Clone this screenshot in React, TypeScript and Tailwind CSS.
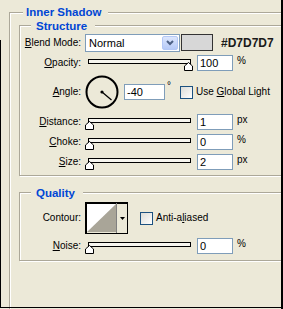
import React from "react";

const font = "font-['Liberation_Sans',Arial,sans-serif]";

function Legend({ title, offset }: { title: string; offset: "outer" | "inner" }) {
  return (
    <div
      className={
        offset === "outer"
          ? "-mt-[8px] mb-[-6px] flex h-[14px] items-center"
          : "-mt-[7px] mb-[-7px] flex h-[14px] items-center"
      }
    >
      <div className={offset === "outer" ? "w-[13px] shrink-0" : "w-[11px] shrink-0"} />
      <div
        className={
          offset === "outer"
            ? "bg-[#ECE9D8] pl-[3px] pr-[7px] text-[11.5px] font-bold leading-[14px] text-[#0046D5]"
            : "bg-[#ECE9D8] pl-[5px] pr-[8px] text-[11.5px] font-bold leading-[14px] text-[#0046D5]"
        }
      >
        {title}
      </div>
    </div>
  );
}

function Group({
  title,
  offset,
  className,
  children,
}: {
  title: string;
  offset: "outer" | "inner";
  className?: string;
  children?: React.ReactNode;
}) {
  return (
    <div
      className={`border border-[#ACA899] shadow-[inset_1px_1px_0_#fff,1px_1px_0_#fff] ${className ?? ""}`}
    >
      <Legend title={title} offset={offset} />
      {children}
    </div>
  );
}

function Label({ key1, post }: { key1?: string; post?: string }) {
  return (
    <div className="w-[61px] shrink-0 text-right text-[10px] leading-[12px] text-black">
      {key1 && <span className="underline underline-offset-[1px]">{key1}</span>}
      {post}
    </div>
  );
}

function Field({ value, w = "w-[36px]" }: { value: string; w?: string }) {
  return (
    <div
      className={`h-[16px] ${w} shrink-0 border border-[#7F9DB9] bg-white pl-[2px] text-[11px] leading-[14px] text-black`}
    >
      {value}
    </div>
  );
}

function Thumb({ max }: { max?: boolean }) {
  return (
    <svg
      className={max ? "absolute left-[99px] top-[7px]" : "absolute left-0 top-[7px]"}
      width="9"
      height="9"
      viewBox="0 0 9 9"
    >
      <polygon
        points="4.5,0.5 8.5,4 8.5,8.5 0.5,8.5 0.5,4"
        fill="#fff"
        stroke="#000"
        strokeWidth="1"
      />
    </svg>
  );
}

function Slider({ max }: { max?: boolean }) {
  return (
    <div className="relative h-[16px] w-[108px] shrink-0">
      <div className="absolute left-[3px] top-[4px] h-[5px] w-[103px] border border-black bg-[#F6F5EE]" />
      <Thumb max={max} />
    </div>
  );
}

function Unit({ text }: { text: string }) {
  return <span className="ml-[4px] self-start text-[10px] leading-[12px] text-black">{text}</span>;
}

function Check() {
  return (
    <div className="h-[13px] w-[13px] shrink-0 border border-[#1C5180] bg-gradient-to-br from-[#DCDCD7] to-white" />
  );
}

function SliderRow({
  label,
  value,
  unit,
  max,
  mt,
}: {
  label: [string, string];
  value: string;
  unit: string;
  max?: boolean;
  mt: string;
}) {
  return (
    <div className={`flex h-[16px] items-center ${mt}`}>
      <Label key1={label[0]} post={label[1]} />
      <div className="ml-[4px] flex items-center">
        <Slider max={max} />
        <div className="ml-[4px]">
          <Field value={value} />
        </div>
        <Unit text={unit} />
      </div>
    </div>
  );
}

export default function App() {
  return (
    <div className={`relative h-[309px] w-[283px] overflow-hidden bg-[#ECE9D8] ${font}`}>
      <Group title="Inner Shadow" offset="outer" className="ml-[9px] mt-[12px] h-[330px] w-[320px]">
        <Group title="Structure" offset="inner" className="ml-[9px] mt-[12px] w-[300px] pb-[5px]">
          {/* Blend mode */}
          <div className="mt-[8px] flex h-[18px] items-center">
            <Label key1="B" post="lend Mode:" />
            <div className="ml-[4px] flex h-[18px] w-[95px] items-center justify-between border border-[#7F9DB9] bg-white pl-[3px] pr-px">
              <span className="text-[11px] leading-[14px] text-black">Normal</span>
              <div className="flex h-[14px] w-[16px] items-center justify-center rounded-[2px] border border-[#B4C8F6] bg-gradient-to-b from-[#DCE6FD] to-[#B6CAF7]">
                <svg width="8" height="6" viewBox="0 0 8 6">
                  <polyline points="1,1 4,4 7,1" fill="none" stroke="#4D6185" strokeWidth="2" />
                </svg>
              </div>
            </div>
            <div className="-mt-[2px] ml-[1px] h-[17px] w-[32px] border border-[#333] bg-[#D7D7D7]" />
            <span className="ml-[8px] text-[12px] font-bold leading-[14px] text-[#1a1a1a]">#D7D7D7</span>
          </div>

          {/* Opacity */}
          <SliderRow label={["O", "pacity:"]} value="100" unit="%" max mt="mt-[3px]" />

          {/* Angle */}
          <div className="mt-[5px] flex h-[32px] items-center">
            <Label key1="A" post="ngle:" />
            <svg className="ml-[4px] shrink-0" width="34" height="34" viewBox="0 0 34 34">
              <circle cx="17" cy="17" r="15.5" fill="none" stroke="#000" strokeWidth="2" />
              <line x1="17" y1="17" x2="26.5" y2="25" stroke="#000" strokeWidth="1.2" />
              <circle cx="17" cy="17" r="1.6" fill="#000" />
            </svg>
            <div className="ml-[5px]">
              <Field value="-40" w="w-[41px]" />
            </div>
            <span className="ml-[2px] self-start pt-[6px] text-[10px] leading-[8px] text-black">°</span>
            <div className="ml-[9px]">
              <Check />
            </div>
            <span className="ml-[3px] text-[10px] leading-[12px] text-black">
              Use <span className="underline underline-offset-[1px]">G</span>lobal Light
            </span>
          </div>

          <SliderRow label={["D", "istance:"]} value="1" unit="px" mt="mt-[6px]" />
          <SliderRow label={["C", "hoke:"]} value="0" unit="%" mt="mt-[4px]" />
          <SliderRow label={["S", "ize:"]} value="2" unit="px" mt="mt-[4px]" />
        </Group>

        <Group title="Quality" offset="inner" className="ml-[9px] mt-[16px] w-[300px] pb-[6px]">
          <div className="mt-[9px] flex h-[32px] items-center">
            <Label post="Contour:" />
            <div className="ml-[4px] flex h-[32px] w-[43px] shrink-0 border border-black shadow-[inset_1px_1px_0_#000]">
              <svg className="ml-px mt-px" width="29" height="28" viewBox="0 0 29 28">
                <rect width="29" height="28" fill="#fff" />
                <polygon points="0,28 29,0 29,28" fill="#A9A598" />
              </svg>
              <div className="flex flex-1 items-center justify-center border-l border-[#808080]">
                <svg width="5" height="3" viewBox="0 0 5 3">
                  <polygon points="0,0 5,0 2.5,3" fill="#000" />
                </svg>
              </div>
            </div>
            <div className="ml-[12px]">
              <Check />
            </div>
            <span className="ml-[3px] text-[10px] leading-[12px] text-black">
              Anti-a<span className="underline underline-offset-[1px]">l</span>iased
            </span>
          </div>
          <SliderRow label={["N", "oise:"]} value="0" unit="%" mt="mt-[4px]" />
        </Group>
      </Group>

      {/* window frame edges */}
      <div className="absolute right-0 top-0 h-full w-[2px] bg-black" />
      <div className="absolute bottom-[1px] left-0 h-px w-full bg-black" />
      <div className="absolute bottom-[1px] left-0 top-[40px] w-px bg-black" />
    </div>
  );
}
